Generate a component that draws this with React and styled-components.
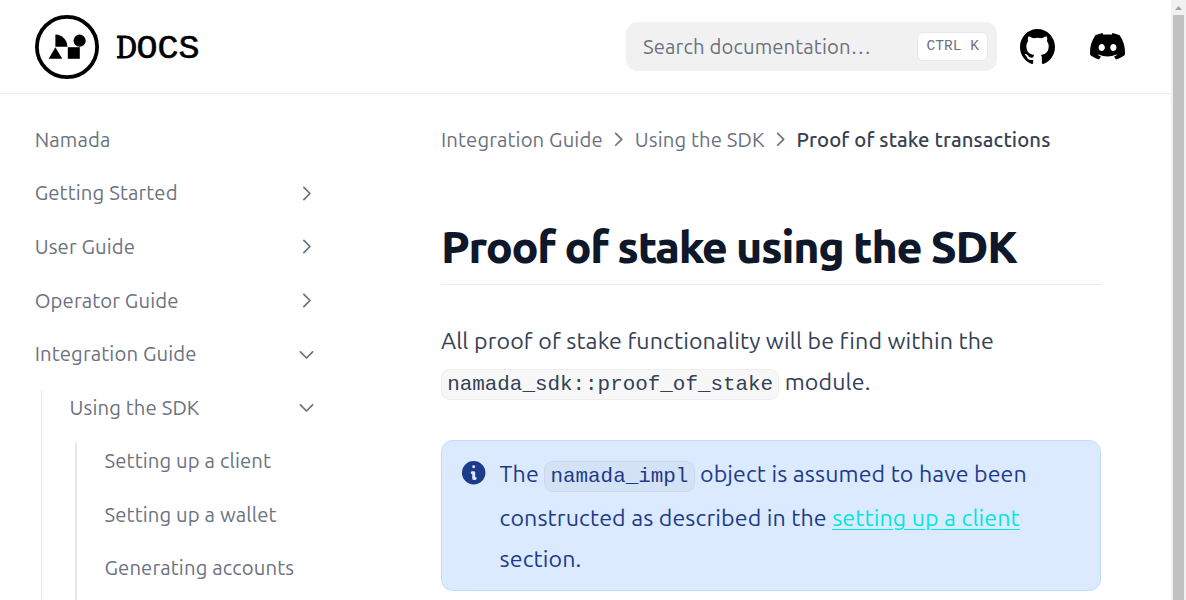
import React from "react";
import styled, { createGlobalStyle, css } from "styled-components";

const GlobalStyle = createGlobalStyle`
  html { font-size: 23.2px; }
  *, *::before, *::after { box-sizing: border-box; }
  body {
    margin: 0;
    background: #fff;
    font-family: Ubuntu, "Noto Sans", sans-serif;
    overflow: hidden;
  }
  a { color: inherit; text-decoration: none; }
`;

const Window = styled.div`
  display: flex;
  width: 1186px;
  height: 600px;
  overflow: hidden;
`;

const Page = styled.div`
  flex: 1;
  min-width: 0;
  height: 600px;
  overflow: hidden;
`;

const Scrollbar = styled.div`
  width: 15px;
  height: 600px;
  padding: 6px 2px 0;
  background: #f1f1f1;
  display: flex;
  flex-direction: column;
  align-items: center;
  gap: 5px;
  svg { flex: none; display: block; }
`;

const Thumb = styled.div`
  flex: 1;
  width: 11px;
  background: #c1c1c1;
`;

const Header = styled.header`
  display: flex;
  align-items: center;
  height: 93px;
  padding: 0 46px 0 35px;
  background: #fff;
  box-shadow: 0 2px 4px rgba(0, 0, 0, 0.02), 0 1px 0 rgba(0, 0, 0, 0.06);
`;

const Logo = styled.a`
  display: block;
  height: 64px;
  margin: 0 auto 0 0;
  svg { display: block; }
`;

const Search = styled.div`
  display: flex;
  align-items: center;
  justify-content: space-between;
  width: 371px;
  height: 49px;
  padding: 0 9px 0 17px;
  border-radius: 11.75px;
  background: #f1f1f1;
  color: #6b7280;
  font-size: 20.3px;
  letter-spacing: 0.12px;
  line-height: 29px;
`;

const Kbd = styled.kbd`
  height: 29px;
  padding: 0 8px;
  border: 1px solid #e5e7eb;
  border-radius: 6px;
  background: #fff;
  color: #6b7280;
  font: 500 14.6px/26px "Liberation Mono", monospace;
  letter-spacing: 0;
  white-space: pre;
`;

const IconLink = styled.a`
  display: block;
  width: 35px;
  margin-left: ${(p) => p.$gap}px;
  svg { display: block; width: 100%; }
`;

const Body = styled.div`
  display: flex;
`;

const Sidebar = styled.aside`
  width: 329px;
  height: 507px;
  overflow: hidden;
  padding: 20px 12.5px 0 34.7px;
`;

const Item = styled.a`
  display: flex;
  align-items: center;
  justify-content: space-between;
  height: 53.6px;
  color: #6b7280;
  font-size: 20.3px;
  font-weight: 410;
  letter-spacing: 0.13px;
  line-height: 26px;
`;

const Branch = styled.div`
  margin-left: 6px;
  margin-top: ${(p) => p.$top || 0}px;
  padding-left: ${(p) => (p.$line === 2 ? 27 : 27.8)}px;
  padding-bottom: 20px;
  border-left: ${(p) => p.$line}px solid #e5e7eb;
`;

const BranchItem = styled(Item)`
  ${(p) => p.$first && css`
    height: 45px;
    align-items: flex-start;
    padding-top: 5px;
    svg { margin-top: 2.5px; }
  `}
`;

const Chevron = styled.svg`
  flex: none;
  width: ${(p) => p.$size}px;
  height: ${(p) => p.$size}px;
  transform: rotate(${(p) => (p.$open ? 90 : 0)}deg);
  fill: none;
  stroke: currentColor;
  stroke-width: 2;
  stroke-linecap: round;
  stroke-linejoin: round;
`;

const Article = styled.main`
  width: 660px;
  margin-left: 112px;
  padding-top: 32px;
`;

const Breadcrumb = styled.nav`
  display: flex;
  align-items: center;
  gap: 5.75px;
  height: 29px;
  color: #6b7280;
  font-size: 20.3px;
  letter-spacing: 0.12px;
  white-space: nowrap;
`;

const Current = styled.span`
  color: #374151;
  font-weight: 560;
`;

const Title = styled.h1`
  margin: 62px 0 0;
  height: 69px;
  border-bottom: 1px solid #ebebeb;
  color: #0f172a;
  font-size: 44.7px;
  font-weight: 770;
  letter-spacing: -0.0285em;
  line-height: 60px;
  white-space: nowrap;
`;

const Paragraph = styled.p`
  margin: 35.2px 0 0;
  color: #334155;
  font-size: 23.2px;
  font-weight: 415;
  letter-spacing: 0.11px;
  line-height: 41.125px;
`;

const Code = styled.code`
  padding: 2.9px 5.2px;
  border: 1px solid rgba(0, 0, 0, 0.04);
  border-radius: 8.8px;
  background: rgba(0, 0, 0, 0.03);
  font-family: "Liberation Mono", monospace;
  font-size: 20.9px;
  letter-spacing: 0;
`;

const Callout = styled.section`
  display: flex;
  gap: 11.6px;
  height: 151px;
  margin-top: 35px;
  padding: 12px 20px 0 16.6px;
  border: 1px solid #bfdbfe;
  border-radius: 11.75px;
  background: #dbeafe;
  color: #1e3a8a;
  font-size: 23.2px;
  font-weight: 415;
  letter-spacing: 0.11px;
  line-height: 41.125px;
  ${Code} { vertical-align: 0.6px; }
`;

const InfoIcon = styled.svg`
  flex: none;
  width: 29.4px;
  height: 29.4px;
  margin-top: 5px;
`;

const TextLink = styled.a`
  color: #00e5e5;
  text-decoration: underline;
  text-decoration-thickness: from-font;
  text-underline-position: from-font;
`;

function Arrow({ open, size = 21 }) {
  return (
    <Chevron viewBox="0 0 24 24" $open={open} $size={size}>
      <path d="M9 5l7 7-7 7" />
    </Chevron>
  );
}

function NamadaLogo() {
  return (
    <svg width="166" height="64" viewBox="0 0 166 64">
      <circle cx="32" cy="32" r="30.1" fill="#fff" stroke="#000" strokeWidth="3.8" />
      <path d="M20.4 19.6A12 12 0 0 1 32.4 31.7H20.4Z" />
      <circle cx="44.6" cy="25.7" r="6.1" />
      <path d="M20.4 32.2L27.2 43.8H13.7Z" />
      <path d="M32.8 32.2H44.8V43.8H32.8Z" />
      <g stroke="#000">
        <text x="81" y="43" fontFamily="DejaVu Serif, serif" fontSize="29.5" strokeWidth="1.1" textLength="21" lengthAdjust="spacingAndGlyphs">D</text>
        <text x="101.5" y="43" fontFamily="Liberation Mono, monospace" fontSize="33" strokeWidth="0.6" textLength="63" lengthAdjust="spacingAndGlyphs">OCS</text>
      </g>
    </svg>
  );
}

export default function App() {
  return (
    <Window>
      <GlobalStyle />
      <Page>
        <Header>
          <Logo href="#"><NamadaLogo /></Logo>
          <Search>
            <span>Search documentation…</span>
            <Kbd>CTRL K</Kbd>
          </Search>
          <IconLink href="#" $gap={23} aria-label="GitHub">
            <svg viewBox="3 3 18 18">
              <path d="M12 3C7.0275 3 3 7.12937 3 12.2276C3 16.3109 5.57625 19.7597 9.15374 20.9824C9.60374 21.0631 9.77249 20.7863 9.77249 20.5441C9.77249 20.3249 9.76125 19.5982 9.76125 18.8254C7.5 19.2522 6.915 18.2602 6.735 17.7412C6.63375 17.4759 6.19499 16.6569 5.8125 16.4378C5.4975 16.2647 5.0475 15.838 5.80124 15.8264C6.51 15.8149 7.01625 16.4954 7.18499 16.7723C7.99499 18.1679 9.28875 17.7758 9.80625 17.5335C9.885 16.9337 10.1212 16.53 10.38 16.2993C8.3775 16.0687 6.285 15.2728 6.285 11.7432C6.285 10.7397 6.63375 9.9092 7.20749 9.26326C7.1175 9.03257 6.8025 8.08674 7.2975 6.81794C7.2975 6.81794 8.05125 6.57571 9.77249 7.76377C10.4925 7.55615 11.2575 7.45234 12.0225 7.45234C12.7875 7.45234 13.5525 7.55615 14.2725 7.76377C15.9937 6.56418 16.7475 6.81794 16.7475 6.81794C17.2424 8.08674 16.9275 9.03257 16.8375 9.26326C17.4113 9.9092 17.76 10.7281 17.76 11.7432C17.76 15.2843 15.6563 16.0687 13.6537 16.2993C13.98 16.5877 14.2613 17.1414 14.2613 18.0065C14.2613 19.2407 14.25 20.2326 14.25 20.5441C14.25 20.7863 14.4188 21.0746 14.8688 20.9824C16.6554 20.364 18.2079 19.1866 19.3078 17.6162C20.4077 16.0457 20.9995 14.1611 21 12.2276C21 7.12937 16.9725 3 12 3Z" />
            </svg>
          </IconLink>
          <IconLink href="#" $gap={35} aria-label="Discord">
            <svg viewBox="0 5 30.67 23.25" fillRule="evenodd">
              <path d="M26.0015 6.9529C24.0021 6.03845 21.8787 5.37198 19.6623 5C19.3833 5.48048 19.0733 6.13144 18.8563 6.64292C16.4989 6.30193 14.1585 6.30193 11.8336 6.64292C11.6166 6.13144 11.2911 5.48048 11.0276 5C8.79575 5.37198 6.67235 6.03845 4.6869 6.9529C0.672601 12.8736 -0.41235 18.6548 0.130124 24.3585C2.79599 26.2959 5.36889 27.4739 7.89682 28.2489C8.51679 27.4119 9.07477 26.5129 9.55525 25.5675C8.64079 25.2265 7.77283 24.808 6.93587 24.312C7.15286 24.1571 7.36986 23.9866 7.57135 23.8161C12.6241 26.1255 18.0969 26.1255 23.0876 23.8161C23.3046 23.9866 23.5061 24.1571 23.7231 24.312C22.8861 24.808 22.0182 25.2265 21.1037 25.5675C21.5842 26.5129 22.1422 27.4119 22.7621 28.2489C25.2885 27.4739 27.8769 26.2959 30.5288 24.3585C31.1952 17.7559 29.4733 12.0212 26.0015 6.9529ZM10.2527 20.8402C8.73376 20.8402 7.49382 19.4608 7.49382 17.7714C7.49382 16.082 8.70276 14.7025 10.2527 14.7025C11.7871 14.7025 13.0425 16.082 13.0115 17.7714C13.0115 19.4608 11.7871 20.8402 10.2527 20.8402ZM20.4373 20.8402C18.9183 20.8402 17.6768 19.4608 17.6768 17.7714C17.6768 16.082 18.8873 14.7025 20.4373 14.7025C21.9717 14.7025 23.2271 16.082 23.1961 17.7714C23.1961 19.4608 21.9872 20.8402 20.4373 20.8402Z" />
            </svg>
          </IconLink>
        </Header>
        <Body>
          <Sidebar>
            <Item href="#">Namada</Item>
            <Item href="#">Getting Started<Arrow /></Item>
            <Item href="#">User Guide<Arrow /></Item>
            <Item href="#">Operator Guide<Arrow /></Item>
            <Item href="#">Integration Guide<Arrow open /></Item>
            <Branch $line={1} $top={9}>
              <BranchItem href="#" $first>Using the SDK<Arrow open /></BranchItem>
              <Branch $line={2} $top={8}>
                <BranchItem href="#" $first>Setting up a client</BranchItem>
                <BranchItem href="#">Setting up a wallet</BranchItem>
                <BranchItem href="#">Generating accounts</BranchItem>
              </Branch>
            </Branch>
          </Sidebar>
          <Article>
            <Breadcrumb>
              <span>Integration Guide</span>
              <Arrow size={20.56} />
              <span>Using the SDK</span>
              <Arrow size={20.56} />
              <Current>Proof of stake transactions</Current>
            </Breadcrumb>
            <Title>Proof of stake using the SDK</Title>
            <Paragraph>
              All proof of stake functionality will be find within the <Code>namada_sdk::proof_of_stake</Code> module.
            </Paragraph>
            <Callout>
              <InfoIcon viewBox="0 0 20 20" fill="currentColor">
                <path fillRule="evenodd" clipRule="evenodd" d="M18 10a8 8 0 11-16 0 8 8 0 0116 0zm-7-4a1 1 0 11-2 0 1 1 0 012 0zM9 9a1 1 0 000 2v3a1 1 0 001 1h1a1 1 0 100-2v-3a1 1 0 00-1-1H9z" />
              </InfoIcon>
              <div>
                The <Code>namada_impl</Code> object is assumed to have been constructed as described in the <TextLink href="#">setting up a client</TextLink> section.
              </div>
            </Callout>
          </Article>
        </Body>
      </Page>
      <Scrollbar>
        <svg width="7" height="4" viewBox="0 0 7 4"><path d="M0 4L3.5 0L7 4Z" fill="#a3a3a3" /></svg>
        <Thumb />
      </Scrollbar>
    </Window>
  );
}
